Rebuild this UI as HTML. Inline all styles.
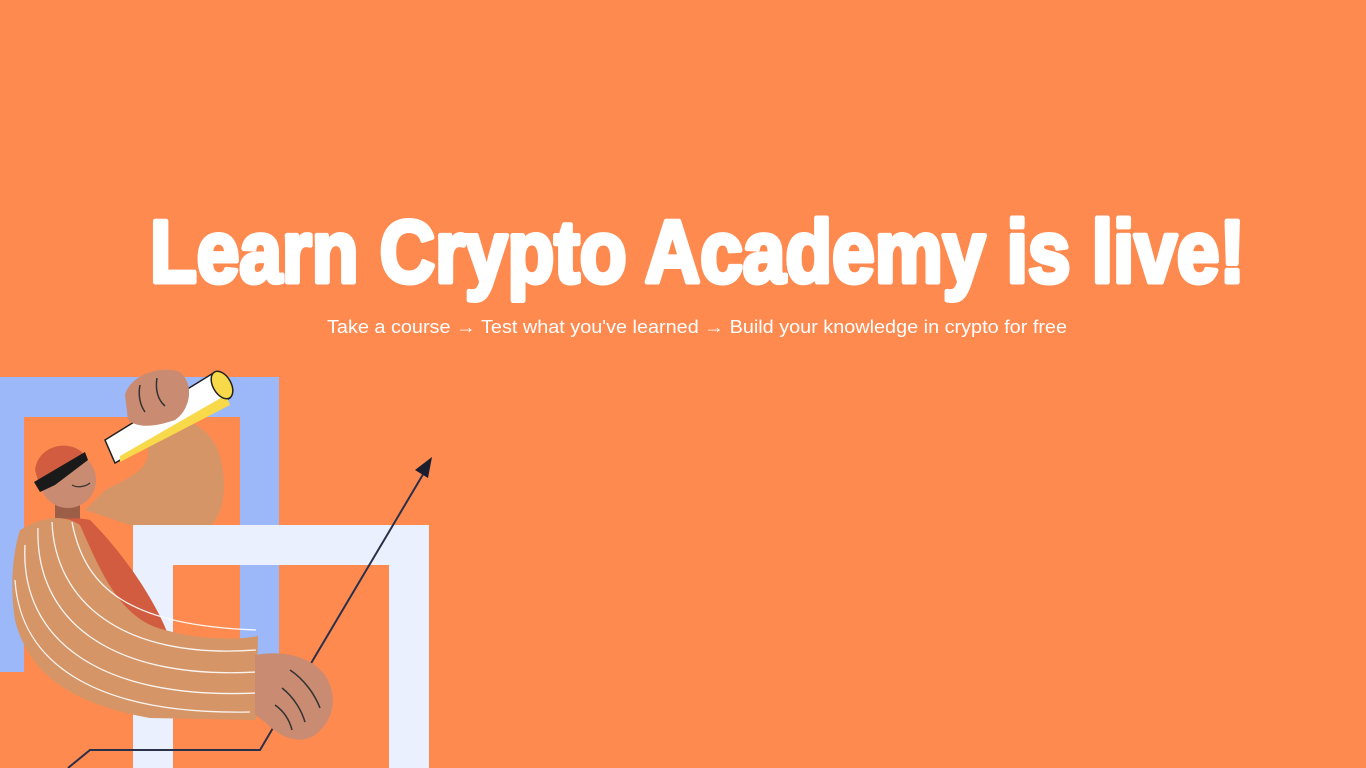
<!DOCTYPE html>
<html><head><meta charset="utf-8"><style>
html,body{margin:0;padding:0;width:1366px;height:768px;overflow:hidden;background:#FF8A50;}
svg{display:block}
</style></head><body>
<svg width="1366" height="768" viewBox="0 0 1366 768" xmlns="http://www.w3.org/2000/svg">
<rect width="1366" height="768" fill="#FF8A50"/>
<text x="150" y="282" textLength="1095" lengthAdjust="spacingAndGlyphs" font-family="Liberation Sans, sans-serif" font-weight="bold" font-size="88" fill="#fff" stroke="#fff" stroke-width="5" stroke-linejoin="round">Learn Crypto Academy is live!</text>
<text x="327" y="333" textLength="740" lengthAdjust="spacingAndGlyphs" font-family="Liberation Sans, sans-serif" font-size="18" fill="#fff">Take a course → Test what you've learned → Build your knowledge in crypto for free</text>
<path d="M0 377H279V672H0Z M24 417V672H240V417Z" fill="#9DB8F8" fill-rule="evenodd"/>
<path d="M133 525H429V768H133Z M173 565V768H389V565Z" fill="#EAF0FD" fill-rule="evenodd"/>
<path d="M68 768L90 750H260L313 660L428 466" stroke="#2a2f4a" stroke-width="2" fill="none"/>
<path d="M432 457L415 470L428 478Z" fill="#1a1d2e"/>
<path d="M150 420C170 410 205 420 218 450C228 480 225 510 212 525L130 525L85 510L105 490C125 480 150 470 148 450Z" fill="#D59566"/>
<path d="M105 440L215 372L230 398L115 463Z" fill="#fff" stroke="#222" stroke-width="1.5"/>
<path d="M120 456L226 395L230 405L120 462Z" fill="#F8D94A"/>
<ellipse cx="222" cy="385" rx="9" ry="15" transform="rotate(-30 222 385)" fill="#F8D94A" stroke="#222" stroke-width="1.5"/>
<path d="M125 395C130 375 160 365 180 372C195 385 190 410 175 420C160 425 140 430 128 420Z" fill="#C98B72"/>
<g stroke="#333" stroke-width="1.5" fill="none"><path d="M140 385C138 395 140 405 145 412"/><path d="M157 378C155 390 158 400 165 406"/></g>
<rect x="55" y="495" width="25" height="25" fill="#9C5E47"/>
<circle cx="68" cy="480" r="28" fill="#C98B72"/>
<path d="M35 470C38 445 70 438 85 455L40 488Z" fill="#D25C3F"/>
<path d="M34 482L85 452L88 460L55 485L40 492Z" fill="#1a1a1a"/>
<path d="M72 485C77 488 85 487 90 483" stroke="#333" stroke-width="1.2" fill="none"/>
<path d="M22 540C40 520 70 515 90 520C130 560 160 610 170 640L100 650L30 600Z" fill="#D25C3F"/>
<path d="M20 530C45 515 65 515 80 525C100 570 120 620 165 630C200 640 240 640 258 636L256 720L150 718C80 705 30 680 15 620C10 590 12 555 20 530Z" fill="#D59566"/>
<g stroke="#fff" stroke-width="1.3" fill="none" opacity="0.9">
<path d="M52 522C55 600 120 660 256 650"/>
<path d="M38 528C35 620 110 680 256 672"/>
<path d="M25 545C20 640 100 700 256 693"/>
<path d="M15 580C20 660 90 715 250 712"/>
<path d="M72 522C85 590 130 625 256 630"/>
</g>
<path d="M255 655C280 650 310 655 325 675C338 695 335 720 315 735C300 745 280 738 265 722L255 715Z" fill="#C98B72"/>
<g stroke="#333" stroke-width="1.5" fill="none"><path d="M290 670C305 680 315 695 320 708"/><path d="M282 688C295 698 302 712 305 722"/><path d="M275 705C285 712 290 722 292 730"/></g>
</svg>
</body></html>
